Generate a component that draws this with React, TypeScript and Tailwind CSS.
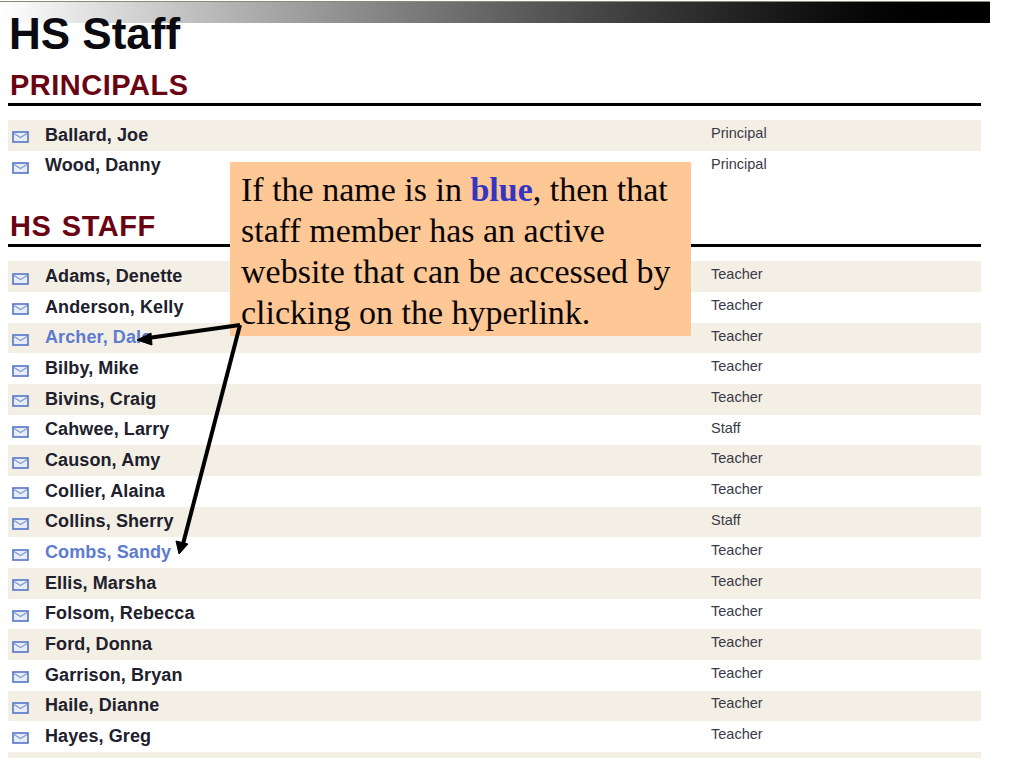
const principals = [
  { name: "Ballard, Joe", role: "Principal" },
  { name: "Wood, Danny", role: "Principal" },
];

const staff = [
  { name: "Adams, Denette", role: "Teacher" },
  { name: "Anderson, Kelly", role: "Teacher" },
  { name: "Archer, Dale", role: "Teacher", link: true },
  { name: "Bilby, Mike", role: "Teacher" },
  { name: "Bivins, Craig", role: "Teacher" },
  { name: "Cahwee, Larry", role: "Staff" },
  { name: "Causon, Amy", role: "Teacher" },
  { name: "Collier, Alaina", role: "Teacher" },
  { name: "Collins, Sherry", role: "Staff" },
  { name: "Combs, Sandy", role: "Teacher", link: true },
  { name: "Ellis, Marsha", role: "Teacher" },
  { name: "Folsom, Rebecca", role: "Teacher" },
  { name: "Ford, Donna", role: "Teacher" },
  { name: "Garrison, Bryan", role: "Teacher" },
  { name: "Haile, Dianne", role: "Teacher" },
  { name: "Hayes, Greg", role: "Teacher" },
];

function Envelope() {
  return (
    <svg width="17" height="12" viewBox="0 0 17 12" className="mt-[4px] shrink-0">
      <rect x="1" y="1" width="15" height="10" fill="#e6ecfa" stroke="#5575c6" strokeWidth="1.6" />
      <path d="M2 2.5 L8.5 6.5 L15 2.5" fill="none" stroke="#8098cc" strokeWidth="1.1" />
    </svg>
  );
}

type Person = { name: string; role: string; link?: boolean };

function Row({ person, shaded }: { person: Person; shaded: boolean }) {
  return (
    <div className={`flex h-[30.67px] items-center ${shaded ? "bg-[#f3efe4]" : ""}`}>
      <div className="ml-[4px] flex w-[699px] items-center">
        <Envelope />
        <span className={`ml-[16px] text-[18px] tracking-[0.1px] font-bold ${person.link ? "text-[#5c7bd1]" : "text-[#20202c]"}`}>
          {person.name}
        </span>
      </div>
      <span className="-mt-[3px] text-[14.5px] text-[#3a3a48]">{person.role}</span>
    </div>
  );
}

function Section({ title, people, className }: { title: string; people: Person[]; className: string }) {
  return (
    <section className={className}>
      <h2 className="pl-[2px] text-[29px] leading-[31px] font-bold tracking-[0.5px] [word-spacing:2px] text-[#6a0412]">{title}</h2>
      <div className="mt-[2px] h-[3px] bg-black" />
      <div className="mt-[14px]">
        {people.map((person, i) => (
          <Row key={person.name} person={person} shaded={i % 2 === 0} />
        ))}
      </div>
    </section>
  );
}

export default function App() {
  return (
    <div className="relative h-[768px] w-[1024px] overflow-hidden bg-white font-['Liberation_Sans',Arial,sans-serif]">
      <div className="mt-[1px] h-[22px] w-[990px] border-t border-[#8a8a7a] bg-gradient-to-r from-white to-black" />

      <div className="w-[981px] pl-[8px]">
        <h1 className="-mt-[12px] pl-[1px] text-[44px] leading-[46px] font-bold text-[#0a0a10]">HS Staff</h1>
        <Section title="PRINCIPALS" people={principals} className="mt-[13px]" />
        <Section title="HS STAFF" people={staff} className="mt-[30px]" />
        <div className="h-[6px] bg-[#f3efe4]" />
      </div>

      {/* callout */}
      <div className="absolute top-[162px] left-[230px] h-[174px] w-[461px] bg-[#fdc796] pt-[7px] pl-[11px] font-['Liberation_Serif',serif] text-[34px] leading-[41px] text-[#0a0505]">
        <p>
          If the name is in <b className="text-[#3535c4]">blue</b>, then that
          <br />
          staff member has an active
          <br />
          website that can be accessed by
          <br />
          clicking on the hyperlink.
        </p>
      </div>

      {/* arrows */}
      <svg width="1024" height="768" className="pointer-events-none absolute top-0 left-0">
        <path d="M240 325 L148 338" stroke="#000" strokeWidth="4" fill="none" />
        <path d="M137 340 L151 333 L152 345 Z" fill="#000" stroke="#000" strokeWidth="1" />
        <path d="M240 325 L183 544" stroke="#000" strokeWidth="4" fill="none" />
        <path d="M179 554 L176 541 L188 544 Z" fill="#000" stroke="#000" strokeWidth="1" />
      </svg>
    </div>
  );
}
